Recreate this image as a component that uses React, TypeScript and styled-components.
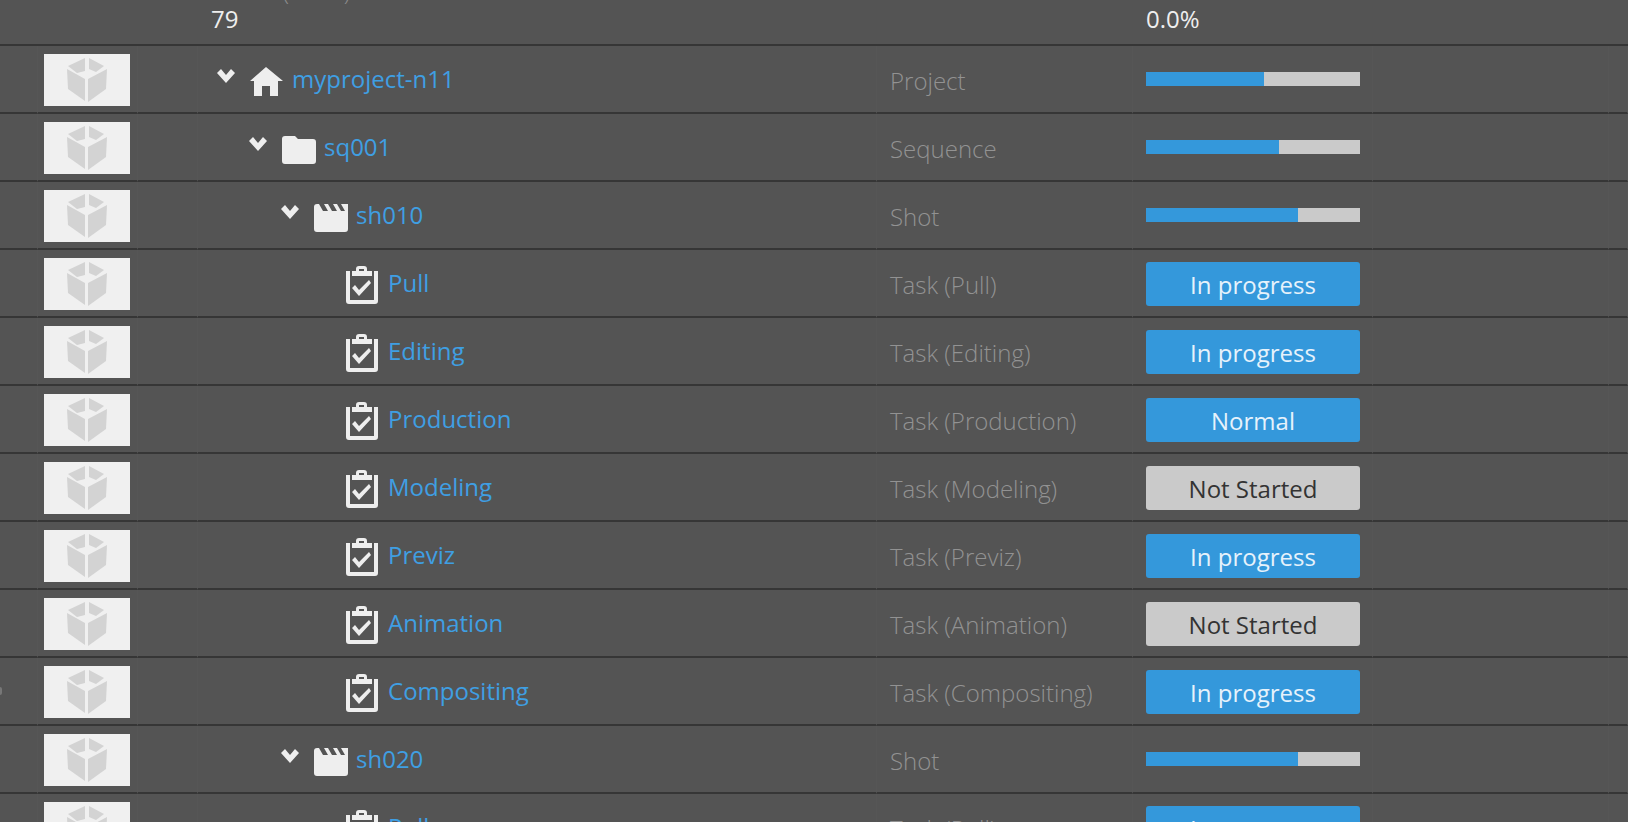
import React from "react";
import styled, { createGlobalStyle } from "styled-components";

const GlobalStyle = createGlobalStyle`
  * { box-sizing: border-box; }
  html, body { margin: 0; background: #545454; }
  body {
    font-family: "Open Sans", "Noto Sans", sans-serif;
    font-size: 24px;
    line-height: 32px;
    color: #eeeeee;
  }
`;

const Viewport = styled.main`
  height: 100vh;
  overflow: hidden;
  background: #545454;
`;

const Table = styled.table`
  width: 100%;
  table-layout: fixed;
  border-collapse: separate;
  border-spacing: 0;
`;

const SummaryCell = styled.td`
  height: 46px;
  padding: 0 0 0 13px;
  border-bottom: 2px solid #363636;
  vertical-align: top;
`;

const Summary = styled.div`
  height: 44px;
  display: flex;
  flex-direction: column;
  justify-content: flex-end;
  padding-bottom: 9px;
  overflow: hidden;
`;

const SummaryLabel = styled.span`
  color: #8a8a8a;
  font-weight: 300;
  line-height: 24px;
  flex-shrink: 0;
`;

const SummaryValue = styled.span`
  flex-shrink: 0;
`;

const Cell = styled.td`
  height: 68px;
  padding: 0 12px 0 13px;
  border-right: 1px solid #565656;
  border-bottom: 2px solid #363636;
  vertical-align: top;
  white-space: nowrap;
`;

const RowMarker = styled.div`
  width: 2px;
  height: 8px;
  margin: 29px 0 0 -13px;
  border-radius: 0 4px 4px 0;
  background: #777777;
`;

const Thumb = styled.div`
  width: 86px;
  height: 52px;
  margin: 8px 0 0 -7px;
  background: #f0f0f0;
  display: flex;
  justify-content: center;
  align-items: center;
`;

const NameLine = styled.div<{ $level: number }>`
  display: flex;
  padding: 17px 0 0 ${(p) => p.$level * 32}px;
`;

const Toggle = styled.button`
  width: 38px;
  height: 32px;
  padding: 0 0 0 6px;
  border: 0;
  background: none;
  color: #eeeeee;
  display: flex;
  flex-shrink: 0;
`;

const Spacer = styled.span`
  width: 38px;
  flex-shrink: 0;
`;

const IconBox = styled.span`
  width: 36px;
  height: 40px;
  margin-right: 7px;
  display: flex;
  flex-shrink: 0;
  color: #eeeeee;
`;

const NameLink = styled.a`
  color: #3f9fe3;
  text-decoration: none;
`;

const TypeText = styled.div`
  padding-top: 19px;
  font-weight: 300;
  color: #929292;
`;

const Progress = styled.div`
  height: 14px;
  margin-top: 26px;
  background: #cacaca;
`;

const ProgressFill = styled.div`
  height: 100%;
  background: #3498db;
`;

const StatusButton = styled.button<{ $idle: boolean }>`
  display: block;
  width: 100%;
  height: 44px;
  margin-top: 12px;
  padding: 2px 0 0;
  border: 0;
  border-radius: 3px;
  background: ${(p) => (p.$idle ? "#cacaca" : "#3498db")};
  color: ${(p) => (p.$idle ? "#333333" : "#e6f2fb")};
  font: inherit;
`;

const Chevron = () => (
  <svg width="20" height="32" viewBox="0 0 20 32" aria-hidden="true">
    <path d="M0 10 4 6l5 6 5-6 4 4-9 10z" fill="currentColor" />
  </svg>
);

const Cube = () => (
  <svg width="40" height="44" viewBox="0 0 40 44" aria-hidden="true">
    <g fill="#d3d3d3">
      <path d="M18 0v13L10 15 1 8z" />
      <path d="M22 0 37 8l-8 6-7-3z" />
      <path d="M0 11 18 21v22L1 31z" />
      <path d="M40 11 21 21v23l18-13z" />
    </g>
  </svg>
);

type Kind = "home" | "folder" | "shot" | "task";

const shapes: Record<Kind, React.ReactNode> = {
  home: <path d="M17 5 34 19h-5v15h-8V24h-8v10H5V19H1z" />,
  folder: <path d="M4 6h10l3 3h15a3 3 0 0 1 3 3v19a3 3 0 0 1-3 3H4a3 3 0 0 1-3-3V9a3 3 0 0 1 3-3z" />,
  shot: <path d="M4 6h2l4 7h5l-4-7h4l4 7h5l-4-7h4l4 7h4l-4-7h7v25a3 3 0 0 1-3 3H4a3 3 0 0 1-3-3V9a3 3 0 0 1 3-3z" />,
  task: (
    <>
      <path d="M1 5h4v29h24V5h4v30a3 3 0 0 1-3 3H4a3 3 0 0 1-3-3z" />
      <path
        fillRule="evenodd"
        d="M7 5h4V3a3 3 0 0 1 3-3h5a3 3 0 0 1 3 3v2h5v5H7zM14 3v2h5V3z"
      />
      <path d="M7 22l3-3 4 5 10-10 2 3-12 13z" />
    </>
  ),
};

const IconSvg = styled.svg`
  overflow: visible;
`;

const KindIcon = ({ kind }: { kind: Kind }) => (
  <IconSvg width="36" height="40" viewBox="0 1 36 40" fill="currentColor" aria-hidden="true">
    {shapes[kind]}
  </IconSvg>
);

interface Item {
  name: string;
  kind: Kind;
  level: number;
  type: string;
  progress?: number;
  status?: string;
  marked?: boolean;
}

const task = (name: string, status: string, marked = false): Item => ({
  name,
  kind: "task",
  level: 3,
  type: `Task (${name})`,
  status,
  marked,
});

const items: Item[] = [
  { name: "myproject-n11", kind: "home", level: 0, type: "Project", progress: 55 },
  { name: "sq001", kind: "folder", level: 1, type: "Sequence", progress: 62 },
  { name: "sh010", kind: "shot", level: 2, type: "Shot", progress: 71 },
  task("Pull", "In progress"),
  task("Editing", "In progress"),
  task("Production", "Normal"),
  task("Modeling", "Not Started"),
  task("Previz", "In progress"),
  task("Animation", "Not Started"),
  task("Compositing", "In progress", true),
  { name: "sh020", kind: "shot", level: 2, type: "Shot", progress: 71 },
  task("Pull", "In progress"),
];

const columns = ["38px", "100px", "60px", "auto", "256px", "240px", "236px", "19px"];

export default function App() {
  return (
    <Viewport>
      <GlobalStyle />
      <Table>
        <colgroup>
          {columns.map((width, i) => (
            <col key={i} style={{ width }} />
          ))}
        </colgroup>
        <tbody>
          <tr>
            <SummaryCell colSpan={3} />
            <SummaryCell>
              <Summary>
                <SummaryLabel>Count (tasks)</SummaryLabel>
                <SummaryValue>79</SummaryValue>
              </Summary>
            </SummaryCell>
            <SummaryCell />
            <SummaryCell>
              <Summary>
                <SummaryLabel>Done %</SummaryLabel>
                <SummaryValue>0.0%</SummaryValue>
              </Summary>
            </SummaryCell>
            <SummaryCell colSpan={2} />
          </tr>
          {items.map((item, i) => (
            <tr key={i}>
              <Cell>{item.marked && <RowMarker />}</Cell>
              <Cell>
                <Thumb>
                  <Cube />
                </Thumb>
              </Cell>
              <Cell />
              <Cell>
                <NameLine $level={item.level}>
                  {item.kind === "task" ? (
                    <Spacer />
                  ) : (
                    <Toggle aria-label={`Collapse ${item.name}`}>
                      <Chevron />
                    </Toggle>
                  )}
                  <IconBox>
                    <KindIcon kind={item.kind} />
                  </IconBox>
                  <NameLink href="#">{item.name}</NameLink>
                </NameLine>
              </Cell>
              <Cell>
                <TypeText>{item.type}</TypeText>
              </Cell>
              <Cell>
                {item.status ? (
                  <StatusButton $idle={item.status === "Not Started"}>{item.status}</StatusButton>
                ) : (
                  <Progress role="progressbar" aria-label={item.name} aria-valuenow={item.progress}>
                    <ProgressFill style={{ width: `${item.progress}%` }} />
                  </Progress>
                )}
              </Cell>
              <Cell />
              <Cell />
            </tr>
          ))}
        </tbody>
      </Table>
    </Viewport>
  );
}
